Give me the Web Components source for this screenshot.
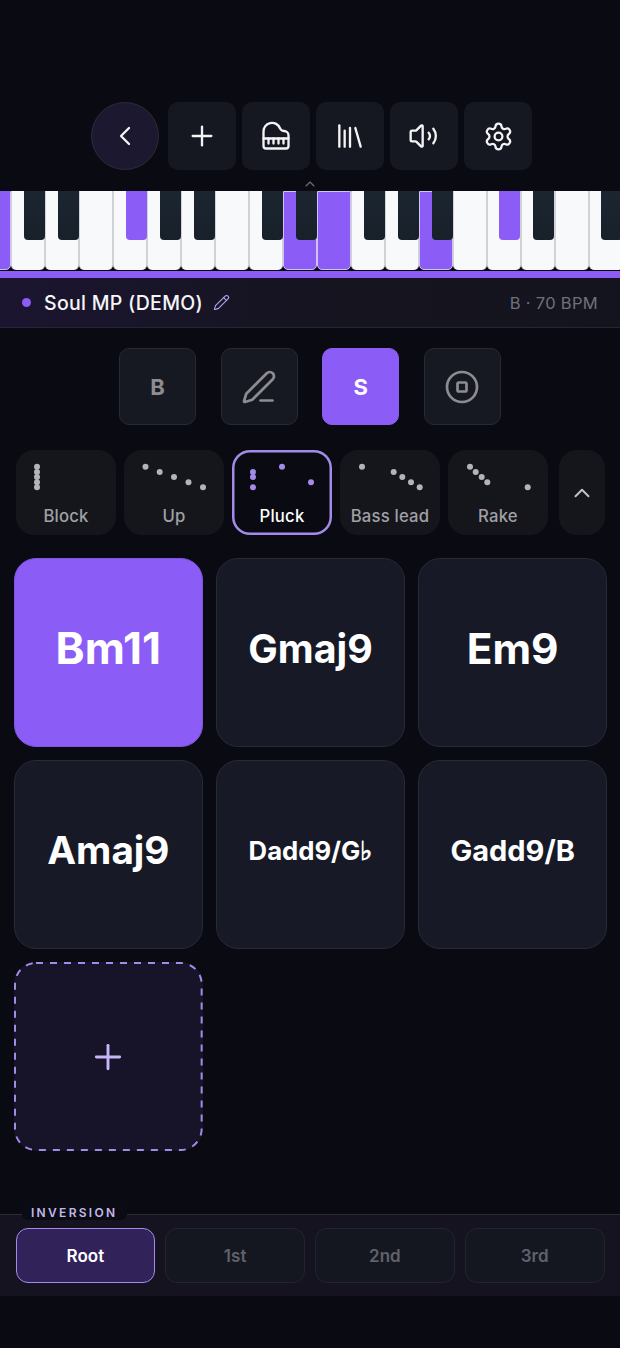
<!DOCTYPE html>
<html lang="en"><head><meta charset="utf-8"><title>Soul MP</title>
<style>
html,body{margin:0;padding:0;background:#0a0a12;}
body{font-family:Inter,"Liberation Sans",sans-serif;color:#fff;width:620px;height:1348px;overflow:hidden;}
</style></head><body>
<app-shell></app-shell>
<script>
const ICONS={
back:'<path d="m15 18-6-6 6-6"/>',
plus:'<path d="M5 12h14"/><path d="M12 5v14"/>',
piano:'<path d="M18.5 8c-1.4 0-2.6-.8-3.2-2A6.87 6.87 0 0 0 2 9v11a2 2 0 0 0 2 2h16a2 2 0 0 0 2-2v-8.5C22 9.6 20.4 8 18.5 8"/><path d="M2 14h20"/><path d="M6 14v4"/><path d="M10 14v4"/><path d="M14 14v4"/><path d="M18 14v4"/>',
library:'<path d="m16 6 4 14"/><path d="M12 6v14"/><path d="M8 8v12"/><path d="M4 4v16"/>',
volume:'<path d="M11 4.702a.705.705 0 0 0-1.203-.498L6.413 7.587A1.4 1.4 0 0 1 5.416 8H3a1 1 0 0 0-1 1v6a1 1 0 0 0 1 1h2.416a1.4 1.4 0 0 1 .997.413l3.383 3.384A.705.705 0 0 0 11 19.298z"/><path d="M15.5 9.5a4 4 0 0 1 0 5"/><path d="M19 6.5a9 9 0 0 1 0 11"/>',
gear:'<path d="M9.671 4.136a2.34 2.34 0 0 1 4.659 0 2.34 2.34 0 0 0 3.319 1.915 2.34 2.34 0 0 1 2.33 4.033 2.34 2.34 0 0 0 0 3.831 2.34 2.34 0 0 1-2.33 4.033 2.34 2.34 0 0 0-3.319 1.915 2.34 2.34 0 0 1-4.659 0 2.34 2.34 0 0 0-3.32-1.915 2.34 2.34 0 0 1-2.33-4.033 2.34 2.34 0 0 0 0-3.831A2.34 2.34 0 0 1 6.35 6.051a2.34 2.34 0 0 0 3.319-1.915"/><circle cx="12" cy="12" r="3"/>',
pen:'<path d="M13 21h8"/><path d="M21.174 6.812a1 1 0 0 0-3.986-3.987L3.842 16.174a2 2 0 0 0-.5.83l-1.321 4.352a.5.5 0 0 0 .623.622l4.353-1.32a2 2 0 0 0 .83-.497z"/>',
pencil:'<path d="M21.174 6.812a1 1 0 0 0-3.986-3.987L3.842 16.174a2 2 0 0 0-.5.83l-1.321 4.352a.5.5 0 0 0 .623.622l4.353-1.32a2 2 0 0 0 .83-.497z"/><path d="m15 5 4 4"/>',
stop:'<circle cx="12" cy="12" r="10"/><rect x="9" y="9" width="6" height="6" rx="1"/>',
up:'<path d="m18 15-6-6-6 6"/>'
};
function icon(n,s,w,c){return `<svg width="${s}" height="${s}" viewBox="0 0 24 24" fill="none" stroke="${c||'currentColor'}" stroke-width="${w}" stroke-linecap="round" stroke-linejoin="round" aria-hidden="true">${ICONS[n]}</svg>`;}
class Base extends HTMLElement{
  constructor(){super();this.attachShadow({mode:'open'});}
  connectedCallback(){this.shadowRoot.innerHTML=this.render();}
}
class ToolBtn extends Base{render(){const round=this.hasAttribute('round');return `<style>
:host{display:flex;width:68px;height:68px;align-items:center;justify-content:center;box-sizing:border-box;color:#f4f4f6;
background:${round?'#1c1830':'#151821'};border-radius:${round?'50%':'10px'};${round?'border:1px solid #2c2a3c;margin-right:3px;':''}}
</style>${icon(this.getAttribute('icon'),+(this.getAttribute('size')||32),this.getAttribute('w')||1.75)}`;}}
class TopBar extends Base{render(){return `<style>
:host{display:flex;flex-direction:column;height:191px;box-sizing:border-box;padding-top:102px;background:#0a0a12;align-items:center;}
.row{display:flex;gap:6px;margin-left:3px;}
.c{margin-top:6px;height:12px;line-height:0;color:#6d6d77;}
</style><div class="row">
<tool-btn round icon="back"></tool-btn><tool-btn icon="plus"></tool-btn><tool-btn icon="piano" size="30" w="1.85"></tool-btn><tool-btn icon="library"></tool-btn><tool-btn icon="volume"></tool-btn><tool-btn icon="gear" size="31"></tool-btn>
</div><div class="c">${icon('up',16,1.75)}</div>`;}}
class WhiteKey extends Base{render(){const a=this.hasAttribute('active');return `<style>
:host{display:block;width:34px;height:79px;box-sizing:border-box;border-radius:0 0 5px 5px;flex:none;
background:${a?'#8b5cf6':'#f8f9fb'};border:1.5px solid ${a?'#cfc3ef':'#d2d3d6'};border-width:${a?'1.5px':'0 1.5px'};}
</style>`;}}
class BlackKey extends Base{render(){const a=this.hasAttribute('active');return `<style>
:host{position:absolute;top:0;left:${this.getAttribute('x')}px;width:21px;height:49px;border-radius:0 0 4px 4px;background:${a?'#8b5cf6':'linear-gradient(#1c2630,#18202a)'};}
</style>`;}}
class PianoKeys extends Base{render(){
 const act=new Set([0,9,10,13]);let w='';for(let i=0;i<19;i++)w+=`<white-key ${act.has(i)?'active':''}></white-key>`;
 const blacks=[[-11,1],[24],[58],[126,1],[160],[194],[262],[296],[364],[398],[432],[499,1],[533],[601]];
 return `<style>
:host{display:block;position:relative;height:87px;overflow:hidden;background:#07070c;}
.w{display:flex;margin-left:-23.5px;}
.bar{position:absolute;left:0;right:0;top:80px;height:7px;background:#8b5cf6;}
</style><div class="w">${w}</div>${blacks.map(b=>`<black-key x="${b[0]}" ${b[1]?'active':''}></black-key>`).join('')}<div class="bar"></div>`;}}
class StatusBar extends Base{render(){return `<style>
:host{display:flex;align-items:center;height:50px;box-sizing:border-box;padding:0 22px 0 22px;background:linear-gradient(90deg,#1b1530,#15141f 55%,#14141e);border-bottom:1px solid #262631;}
.d{width:9px;height:9px;border-radius:50%;background:#8b5cf6;margin-right:13px;}
.t{font-size:19.5px;font-weight:500;letter-spacing:.3px;color:#f6f6f8;}
svg{margin-left:10px;display:block;}
.r{margin-left:auto;font-size:16.5px;color:#70707c;letter-spacing:.3px;}
</style><span class="d"></span><span class="t">Soul MP (DEMO)</span>${icon('pencil',17,1.5,'#b9a5f5')}<span class="r">B · 70 BPM</span>`;}}
class ModeBtn extends Base{render(){const a=this.hasAttribute('active');return `<style>
:host{display:flex;width:77px;height:77px;box-sizing:border-box;align-items:center;justify-content:center;border-radius:10px;
background:${a?'#8b5cf6':'#161922'};border:1px solid ${a?'#8b5cf6':'#262a33'};color:${a?'#fff':'#8d8d91'};font-size:22px;font-weight:700;}
</style><slot></slot>`;}}
class ModeRow extends Base{render(){return `<style>
:host{display:flex;justify-content:center;gap:24.6px;margin-top:20px;}
</style><mode-btn>B</mode-btn><mode-btn>${icon('pen',36,1.8)}</mode-btn><mode-btn active>S</mode-btn><mode-btn>${icon('stop',36,1.8)}</mode-btn>`;}}
class PatCard extends Base{render(){const a=this.hasAttribute('active');const dots=JSON.parse(this.getAttribute('dots'));
return `<style>
:host{display:flex;flex-direction:column;align-items:center;position:relative;width:100px;height:85px;box-sizing:border-box;border-radius:18px;flex:none;
background:${a?'#0a0a12':'#15161b'};${a?'box-shadow:inset 0 0 0 2.5px #a48bea;':''}color:${a?'#fff':'#a0a0a6'};}
svg{display:block;width:100px;height:50px;flex:none;}
span{font-size:16.7px;font-weight:500;letter-spacing:.2px;line-height:20px;margin-top:6px;white-space:nowrap;}
</style><svg viewBox="0 0 100 50" aria-hidden="true">${dots.map(d=>`<circle cx="${d[0]}" cy="${d[1]}" r="3" fill="${a?'#a48bea':'#b4b4b8'}"/>`).join('')}</svg><span><slot></slot></span>`;}}
class PatRow extends Base{render(){return `<style>
:host{display:flex;gap:8px;margin-top:25px;padding-left:16px;}
.m{width:46px;height:85px;border-radius:18px;background:#15161b;display:flex;align-items:center;justify-content:center;color:#c4c4c8;margin-left:3px;}
</style>
<pat-card dots='[[21,16.7],[21,22],[21,27],[21,32.3],[21,37.3]]'>Block</pat-card>
<pat-card dots='[[21.5,16.7],[35.7,22],[50,27],[64.5,32.3],[79,37.3]]'>Up</pat-card>
<pat-card active dots='[[21,22],[21,27],[21,37.3],[50,16.7],[79,32.3]]'>Pluck</pat-card>
<pat-card dots='[[22,16.7],[53.7,22],[62.3,27],[71,32.3],[79.7,37.3]]'>Bass lead</pat-card>
<pat-card dots='[[22,16.7],[27.7,22],[33.7,27],[39.3,32.3],[79.7,37.3]]'>Rake</pat-card>
<div class="m">${icon('up',26,1.75)}</div>`;}}
class ChordPad extends Base{render(){const a=this.hasAttribute('active');const add=this.hasAttribute('add');
return `<style>
:host{display:flex;position:relative;height:189px;box-sizing:border-box;align-items:center;justify-content:center;border-radius:22px;font-weight:700;padding-bottom:9px;
font-size:${this.getAttribute('fs')||'40'}px;color:#fff;
background:${add?'#171328':a?'#8b5cf6':'#171a26'};border:${add?'0':a?'1px solid #7f55e0':'1px solid #272b36'};}
:host([add]){padding-bottom:0;color:#c7b6f7;}
.dash{position:absolute;inset:0;width:100%;height:100%;}
</style>${add?'<svg class="dash" aria-hidden="true"><rect x="1" y="1" width="calc(100% - 2px)" height="calc(100% - 2px)" rx="21" fill="none" stroke="#a48bea" stroke-width="2" stroke-dasharray="7 7"/></svg>':''}<slot></slot>`;}}
class ChordGrid extends Base{render(){return `<style>
:host{display:grid;grid-template-columns:repeat(3,1fr);gap:13px 13.5px;margin-top:23px;padding:0 13px 0 14px;}
</style>
<chord-pad active fs="44">Bm11</chord-pad><chord-pad fs="39.3">Gmaj9</chord-pad><chord-pad fs="42.3">Em9</chord-pad>
<chord-pad fs="38.7">Amaj9</chord-pad><chord-pad fs="25.7">Dadd9/G♭</chord-pad><chord-pad fs="29">Gadd9/B</chord-pad>
<chord-pad add>${icon('plus',40,1.75)}</chord-pad>`;}}
class InvBtn extends Base{render(){const a=this.hasAttribute('active');return `<style>
:host{display:flex;flex:1;height:55px;box-sizing:border-box;align-items:center;justify-content:center;border-radius:12px;font-size:17px;font-weight:600;
background:${a?'#31235a':'#151720'};border:${a?'1.5px solid #a48bea':'1px solid #23252d'};color:${a?'#fff':'#5f616b'};}
</style><slot></slot>`;}}
class InvPanel extends Base{render(){return `<style>
:host{display:block;position:relative;margin-top:63px;height:82px;box-sizing:border-box;background:#15131f;border-top:1px solid #2a2a36;padding:13px 15.5px 0 15.5px;}
.l{position:absolute;left:22px;top:-9px;padding:0 10px 0 9px;background:#0b0b13;border-radius:0 0 6px 6px;font-size:12px;font-weight:600;letter-spacing:2.3px;line-height:14px;color:#c4b8ea;}
.r{display:flex;gap:10px;}
</style><div class="l">INVERSION</div><div class="r"><inv-btn active>Root</inv-btn><inv-btn>1st</inv-btn><inv-btn>2nd</inv-btn><inv-btn>3rd</inv-btn></div>`;}}
class AppShell extends Base{render(){return `<style>:host{display:block;width:620px;height:1348px;overflow:hidden;background:#0a0a12;}</style>
<top-bar></top-bar><piano-keys></piano-keys><status-bar></status-bar><mode-row></mode-row><pat-row></pat-row><chord-grid></chord-grid><inv-panel></inv-panel>`;}}
const defs={'tool-btn':ToolBtn,'top-bar':TopBar,'white-key':WhiteKey,'black-key':BlackKey,'piano-keys':PianoKeys,'status-bar':StatusBar,'mode-btn':ModeBtn,'mode-row':ModeRow,'pat-card':PatCard,'pat-row':PatRow,'chord-pad':ChordPad,'chord-grid':ChordGrid,'inv-btn':InvBtn,'inv-panel':InvPanel,'app-shell':AppShell};
for(const k in defs)customElements.define(k,defs[k]);
</script>
</body></html>
